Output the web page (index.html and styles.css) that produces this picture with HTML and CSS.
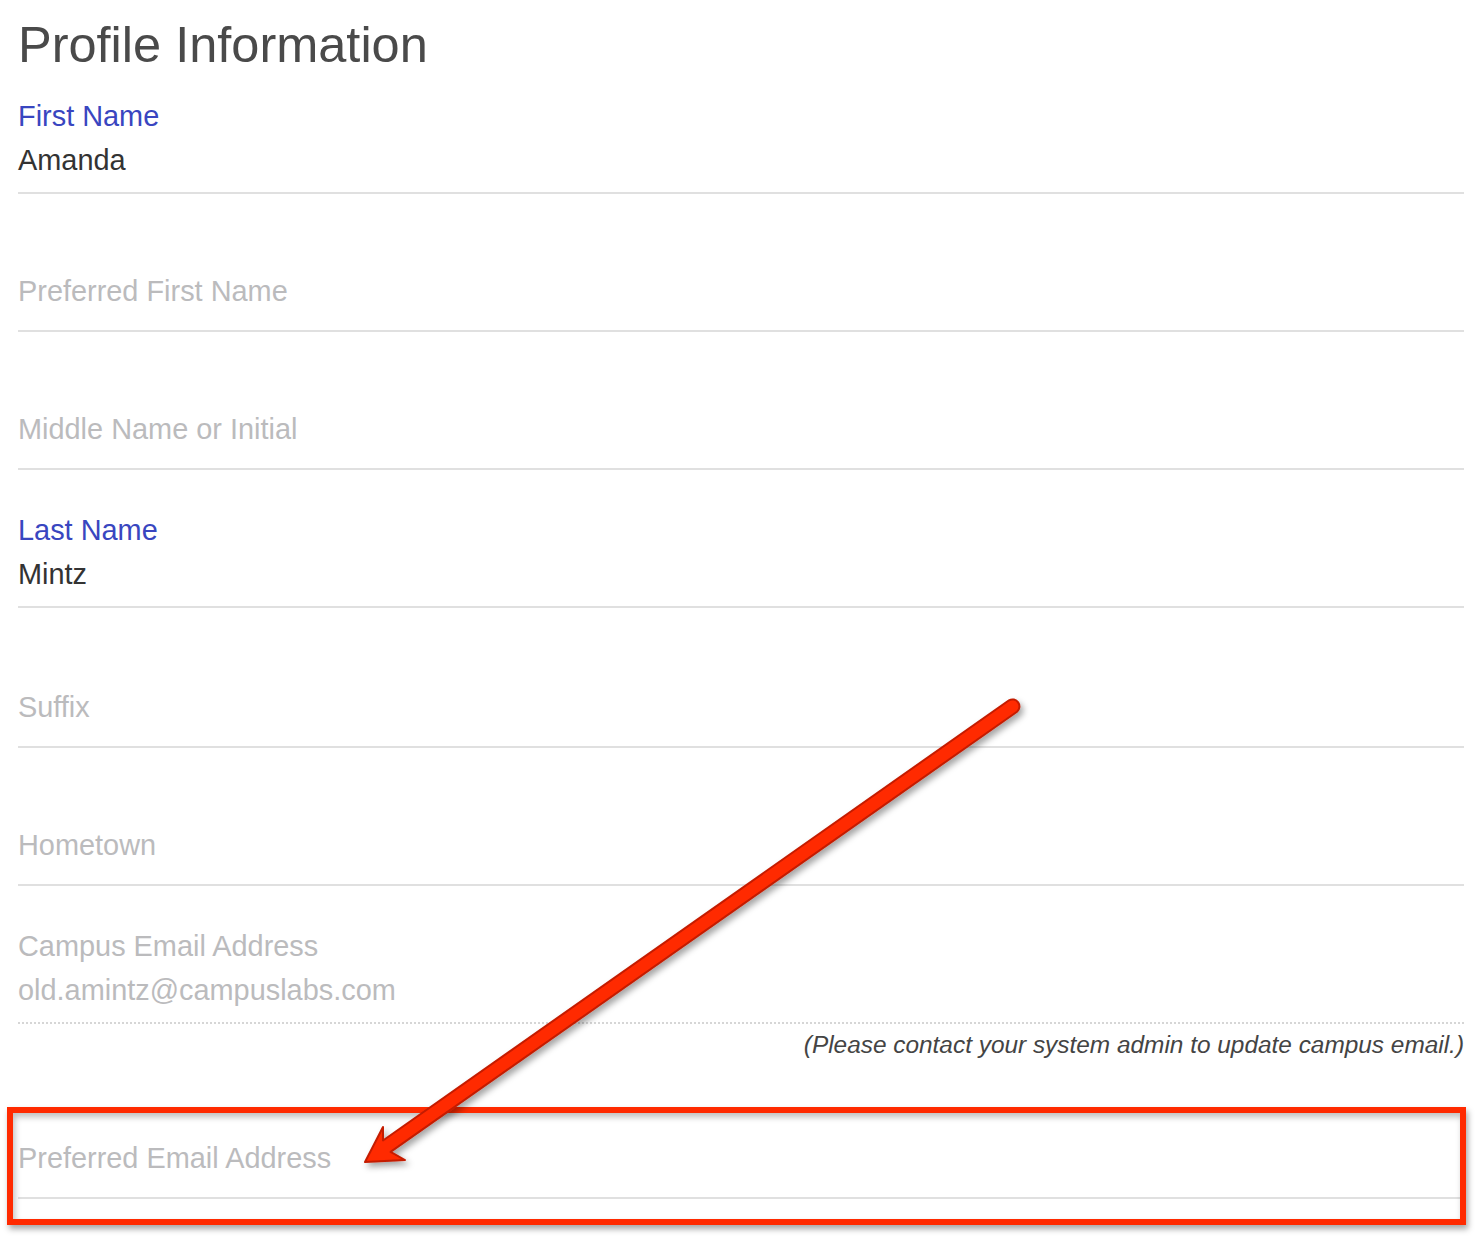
FILE: index.html
```html
<!DOCTYPE html>
<html lang="en">
<head>
<meta charset="utf-8">
<title>Profile Information</title>
<link rel="stylesheet" href="styles.css">
</head>
<body>
<div class="page">
  <form class="profile">
    <h1 class="title">Profile Information</h1>

    <div class="field field-filled field-first">
      <div class="label">First Name</div>
      <div class="value">Amanda</div>
    </div>

    <div class="field field-empty">
      <div class="placeholder">Preferred First Name</div>
    </div>

    <div class="field field-empty">
      <div class="placeholder">Middle Name or Initial</div>
    </div>

    <div class="field field-filled">
      <div class="label">Last Name</div>
      <div class="value">Mintz</div>
    </div>

    <div class="field field-empty field-tall">
      <div class="placeholder">Suffix</div>
    </div>

    <div class="field field-empty">
      <div class="placeholder">Hometown</div>
    </div>

    <div class="field field-filled field-disabled">
      <div class="label">Campus Email Address</div>
      <div class="value">old.amintz@campuslabs.com</div>
    </div>
    <p class="note">(Please contact your system admin to update campus email.)</p>

    <div class="field field-empty">
      <div class="placeholder">Preferred Email Address</div>
    </div>
  </form>

  <div class="highlight-box"></div>

  <svg class="annotation" width="1478" height="1240" viewBox="0 0 1478 1240" aria-hidden="true">
    <defs>
      <filter id="shadow" x="-10%" y="-10%" width="120%" height="120%">
        <feDropShadow dx="3" dy="4" stdDeviation="3" flood-color="#000" flood-opacity="0.35"/>
      </filter>
    </defs>
    <path class="arrow" filter="url(#shadow)"
      d="M1009 700.3 L383 1140.5 L383 1127 L365 1162 L405 1160 L390.6 1151.9 L1017 711.7 A7 7 0 0 0 1009 700.3 Z"/>
  </svg>
</div>
</body>
</html>
```

FILE: styles.css
```css
html, body {
  margin: 0;
  padding: 0;
  background: #ffffff;
}

body {
  font-family: "Liberation Sans", Arial, Helvetica, sans-serif;
}

.page {
  position: relative;
  width: 1478px;
  min-height: 1240px;
  overflow: hidden;
}

.profile {
  display: flex;
  flex-direction: column;
  padding: 15px 14px 0 18px;
}

.title {
  margin: 0;
  font-size: 50.5px;
  line-height: 60px;
  font-weight: normal;
  color: #4a4a4a;
}

.field {
  display: flex;
  flex-direction: column;
  gap: 12px;
  border-bottom: 2px solid #e0e0e0;
  font-size: 28.9px;
  line-height: 32px;
}

.field-filled {
  padding: 44px 0 16px;
}

.field-first {
  padding-top: 25px;
}

.field-empty {
  padding: 81px 0 23px;
}

.field-tall {
  padding-top: 83px;
}

.label {
  color: #3946c0;
}

.value {
  color: #333333;
}

.placeholder {
  color: #bbbbbd;
}

.field-disabled {
  border-bottom: 2px dotted #d6d6d6;
}

.field-disabled .label,
.field-disabled .value {
  color: #bbbbbd;
}

.note {
  margin: 6px 0 0;
  padding-bottom: 1px;
  font-size: 24.4px;
  line-height: 30px;
  font-style: italic;
  text-align: right;
  color: #444444;
}

.highlight-box {
  position: absolute;
  left: 7px;
  top: 1107px;
  width: 1459px;
  height: 118px;
  box-sizing: border-box;
  border: 6px solid #ff2a00;
  box-shadow: 2px 4px 6px rgba(0, 0, 0, 0.35), inset 2px 4px 6px rgba(0, 0, 0, 0.25);
}

.annotation {
  position: absolute;
  left: 0;
  top: 0;
  pointer-events: none;
}

.arrow {
  fill: #ff2a00;
  stroke: #c41c00;
  stroke-width: 2;
  stroke-linejoin: round;
}
```
